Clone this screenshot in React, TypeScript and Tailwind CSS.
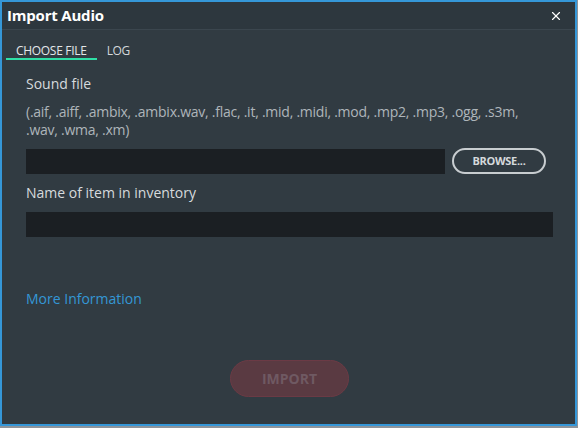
import { X } from 'lucide-react';

const font = { fontFamily: '"Open Sans", "Noto Sans", sans-serif' };

export default function App() {
  return (
    <div className="w-[578px] h-[428px] bg-[#8e949a] pr-px pb-[2px]" style={font}>
      <div className="flex h-full flex-col border-2 border-[#3597d8] bg-[#313b42]">
        <div className="flex h-[28px] shrink-0 items-center justify-between border-b border-[#3b464e] bg-[#2d373e] pl-[5px] pr-[12px]">
          <span className="text-[15px] font-bold tracking-[-0.2px] text-white">Import Audio</span>
          <X size={14} strokeWidth={2} className="text-white" />
        </div>

        <div className="flex items-end px-[4px] pt-[14px]">
          <div className="border-b-2 border-[#2fe0a6] px-[10px] text-[12px] leading-[14px] font-medium tracking-[-0.3px] text-[#e3e7ea]">CHOOSE FILE</div>
          <div className="px-[10px] pb-[2px] text-[12px] leading-[14px] font-medium tracking-[-0.3px] text-[#d3d8db]">LOG</div>
        </div>

        <div className="flex flex-1 flex-col pl-[24px] pr-[22px] pt-[14px]">
          <div className="text-[14px] leading-[20px] text-[#d6dadd]">Sound file</div>
          <div className="mt-[9px] text-[14px] leading-[18px] tracking-[-0.25px] text-[#aeb5ba]">
            (.aif, .aiff, .ambix, .ambix.wav, .flac, .it, .mid, .midi, .mod, .mp2, .mp3, .ogg, .s3m, .wav, .wma, .xm)
          </div>
          <div className="mt-[9px] flex items-center gap-[7px]">
            <div className="h-[25px] w-[419px] bg-[#1b1f23]" />
            <button className="h-[26px] w-[94px] rounded-full border-2 border-[#c8cdd0] text-[11px] font-bold tracking-[-0.3px] text-[#d5d9dc]">BROWSE...</button>
          </div>
          <div className="mt-[9px] text-[14px] leading-[20px] text-[#d6dadd]">Name of item in inventory</div>
          <div className="mt-[9px] h-[25px] w-full bg-[#1b1f23]" />
          <div className="mt-[52px] text-[14px] leading-[20px] text-[#3497d6]">More Information</div>
          <div className="mt-[51px] flex justify-center">
            <button className="h-[37px] w-[119px] rounded-full border border-[#6b3a45] bg-[#5a3a42] text-[14px] font-bold text-[#6f5962]">IMPORT</button>
          </div>
        </div>
      </div>
    </div>
  );
}
